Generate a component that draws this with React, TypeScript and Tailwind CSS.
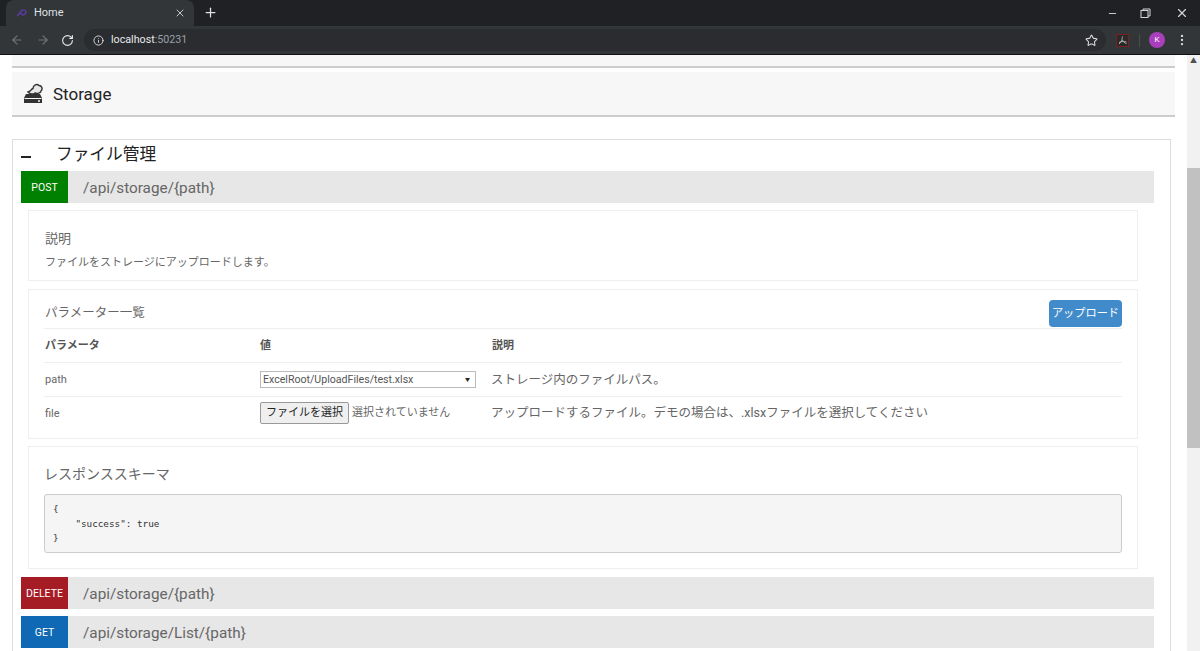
import { ArrowLeft, ArrowRight, RotateCw, Info, Star, X, Plus, Minus, EllipsisVertical } from "lucide-react";

const sans = "font-['Roboto','Noto_Sans_CJK_JP',sans-serif]";

function EndpointRow({ method, color, path, className }: { method: string; color: string; path: string; className?: string }) {
  return (
    <div className={`flex h-8 w-[1133px] items-center bg-[#e7e7e7] ${className ?? ""}`}>
      <div className={`flex h-8 w-[47px] shrink-0 items-center justify-center pt-px text-[10.5px] text-white ${color}`}>{method}</div>
      <div className="pl-[15px] pt-[2px] text-[15.3px] text-[#666]">{path}</div>
    </div>
  );
}

function BrowserChrome() {
  return (
    <div className="shrink-0 border-b border-[#111]">
      <div className="flex h-[26px] items-end bg-[#202124]">
        <div className="ml-[6px] flex h-[26px] w-[188px] items-center rounded-t-lg bg-[#323639] pl-[10px] pr-2">
          <svg width="13" height="10" viewBox="0 0 13 10" fill="none">
            <path d="M1 8 C3 8 4 2 7 2 C10 2 11 4 9 6 C7 8 5 6 4 4" stroke="#5b3a9e" strokeWidth="1.6" />
          </svg>
          <span className="ml-[5px] pt-px text-[11px] text-[#dee1e6]">Home</span>
          <X size={12} className="ml-auto text-[#c4c7cb]" />
        </div>
        <Plus size={15} className="mb-[6px] ml-[9px] text-[#e0e2e5]" />
        <div className="mb-[6px] ml-auto flex items-center text-[#d5d7da]">
          <Minus size={11} className="mr-[22px]" />
          <svg width="11" height="11" viewBox="0 0 11 11" fill="none" stroke="currentColor" className="mr-[24px]">
            <rect x="1" y="2.5" width="7" height="7" />
            <path d="M3 2.5V1H10V8H8" />
          </svg>
          <X size={14} className="mr-[11px]" />
        </div>
      </div>
      <div className="flex h-[28px] items-center bg-[#323639]">
        <ArrowLeft size={14} className="ml-[10px] text-[#70757a]" />
        <ArrowRight size={14} className="ml-[12px] text-[#70757a]" />
        <RotateCw size={13} className="ml-[11px] text-[#e8eaed]" />
        <div className="ml-[10px] flex h-[22px] w-[1022px] items-center rounded-full bg-[#2a2c2f] pl-[9px]">
          <Info size={11} className="text-[#dfe1e5]" />
          <span className="ml-[7px] text-[10.7px] text-[#e8eaed]">localhost<span className="text-[#9aa0a6]">:50231</span></span>
          <Star size={13} className="ml-auto mr-[8px] text-[#d8dadd]" />
        </div>
        <svg width="13" height="13" viewBox="0 0 13 13" fill="none" className="ml-[10px]">
          <rect x="0.5" y="0.5" width="12" height="12" fill="#2a2a2a" stroke="#7a2020" />
          <path d="M6.5 2.5 C6 5 6.5 7 3 10 M6.5 6 C7.5 8 8.5 9 10.5 9.5 M3 8.5 C6 7 8 7.5 10.5 8" stroke="#b0b0b0" strokeWidth="1" />
        </svg>
        <div className="ml-[10px] h-[13px] w-px bg-[#4a4d50]" />
        <div className="ml-[9px] flex h-[16px] w-[16px] items-center justify-center rounded-full bg-[#a93fbd] text-[8px] text-white">K</div>
        <EllipsisVertical size={14} className="ml-[10px] text-[#d8dadd]" />
      </div>
    </div>
  );
}

function StorageIcon() {
  return (
    <svg width="20" height="21" viewBox="0 0 20 21">
      <path d="M1 15 L3 11 H17 L19 15 V20 H1 Z" fill="#333" />
      <path d="M5 9 C8 8 8 6 10 5.5 C10 2 14 0.5 16 2.5 C19 2.5 20 6 18 8 C18 10 14 11 12 10 C10 11.5 7 11 5 9 Z" fill="#e8e8e8" stroke="#333" strokeWidth="1.4" />
      <rect x="1.5" y="15" width="17" height="1" fill="#f7f7f7" />
      <circle cx="16" cy="18" r="1" fill="#f7f7f7" />
    </svg>
  );
}

export default function App() {
  return (
    <div className={`flex h-[651px] w-[1200px] flex-col overflow-hidden bg-white ${sans}`}>
      <BrowserChrome />
      <div className="flex min-h-0 flex-1">
        <div className="min-w-0 flex-1 overflow-hidden">
          <div className="ml-3 h-[13px] w-[1163px] border-b-2 border-[#ccc] bg-[#f7f7f7]" />
          <div className="ml-3 mt-[4px] flex h-[45px] w-[1163px] items-center border-b-2 border-[#ccc] bg-[#f7f7f7] pl-[11px]">
            <StorageIcon />
            <span className="ml-[10px] pt-[3px] text-[17px] text-[#222]">Storage</span>
          </div>
          <div className="ml-3 mt-[22px] h-[600px] w-[1159px] border border-[#ddd] pl-2">
            <div className="flex h-[31px] items-center">
              <span className="mt-[2px] h-[2px] w-[10px] bg-[#222]" />
              <span className="mb-[2px] ml-[25px] text-[16.7px] text-[#222]">ファイル管理</span>
            </div>
            <EndpointRow method="POST" color="bg-[#008000]" path="/api/storage/{path}" />
            <div className="ml-[7px] mt-[7px] h-[71px] w-[1110px] border border-[#eee] px-4 pt-[18px] text-[#666]">
              <div className="text-[13px] leading-5">説明</div>
              <div className="mt-[6px] text-[11px] leading-4">ファイルをストレージにアップロードします。</div>
            </div>
            <div className="ml-[7px] mt-[8px] h-[150px] w-[1110px] border border-[#eee] pl-[15px] pr-[15px] text-[#666]">
              <div className="flex h-[39px] items-end justify-between border-b border-[#eee] pb-[1px]">
                <span className="pb-[4px] pl-px text-[12.5px] leading-5">パラメーター一覧</span>
                <button className="flex h-[27px] w-[73px] items-center justify-center rounded bg-[#428bca] pt-px text-[11.2px] text-white">アップロード</button>
              </div>
              <div className="flex h-[34px] items-center border-b border-[#eee] pl-px pt-[2px] text-[11px] font-bold text-[#555]">
                <span className="w-[215px]">パラメータ</span>
                <span className="w-[232px]">値</span>
                <span>説明</span>
              </div>
              <div className="flex h-[34px] items-center border-b border-[#eee] pl-px">
                <span className="w-[215px] pt-[2px] text-[11px]">path</span>
                <div className="flex h-[17px] w-[216px] items-center justify-between border border-[#bbb] pl-[2px] pr-[5px] text-[10.6px] text-[#555]">
                  <span>ExcelRoot/UploadFiles/test.xlsx</span>
                  <span className="text-[5px] text-[#222]">▼</span>
                </div>
                <span className="ml-[15px] pt-px text-[12.5px]">ストレージ内のファイルパス。</span>
              </div>
              <div className="flex h-[32px] items-center pl-px">
                <span className="w-[215px] pt-[2px] text-[11px]">file</span>
                <div className="flex w-[231px] items-center">
                  <button className="flex h-[22px] w-[89px] items-center justify-center rounded-[2px] border border-[#999] bg-[#efefef] text-[11px] text-[#222]">ファイルを選択</button>
                  <span className="ml-[3px] text-[11px] text-[#666]">選択されていません</span>
                </div>
                <span className="pt-px text-[12.5px]">アップロードするファイル。デモの場合は、.xlsxファイルを選択してください</span>
              </div>
            </div>
            <div className="ml-[7px] mt-[7px] h-[123px] w-[1110px] border border-[#eee] px-[15px] pt-[17px] text-[#666]">
              <div className="text-sm leading-5">レスポンススキーマ</div>
              <pre className="mt-[10px] h-[59px] rounded-[3px] border border-[#ccc] bg-[#f5f5f5] px-2 pt-[7px] font-['DejaVu_Sans_Mono',monospace] text-[9.3px] leading-[14.5px] text-[#333]">{"{\n    \"success\": true\n}"}</pre>
            </div>
            <EndpointRow method="DELETE" color="bg-[#a51c24]" path="/api/storage/{path}" className="mt-2" />
            <EndpointRow method="GET" color="bg-[#0f69b4]" path="/api/storage/List/{path}" className="mt-[7px]" />
          </div>
        </div>
        <div className="flex w-[13px] shrink-0 flex-col items-center bg-[#f1f1f1]">
          <div className="flex h-[13px] items-center text-[7px] leading-none text-[#505050]">▲</div>
          <div className="mt-[100px] h-[280px] w-full bg-[#c1c1c1]" />
        </div>
      </div>
    </div>
  );
}
